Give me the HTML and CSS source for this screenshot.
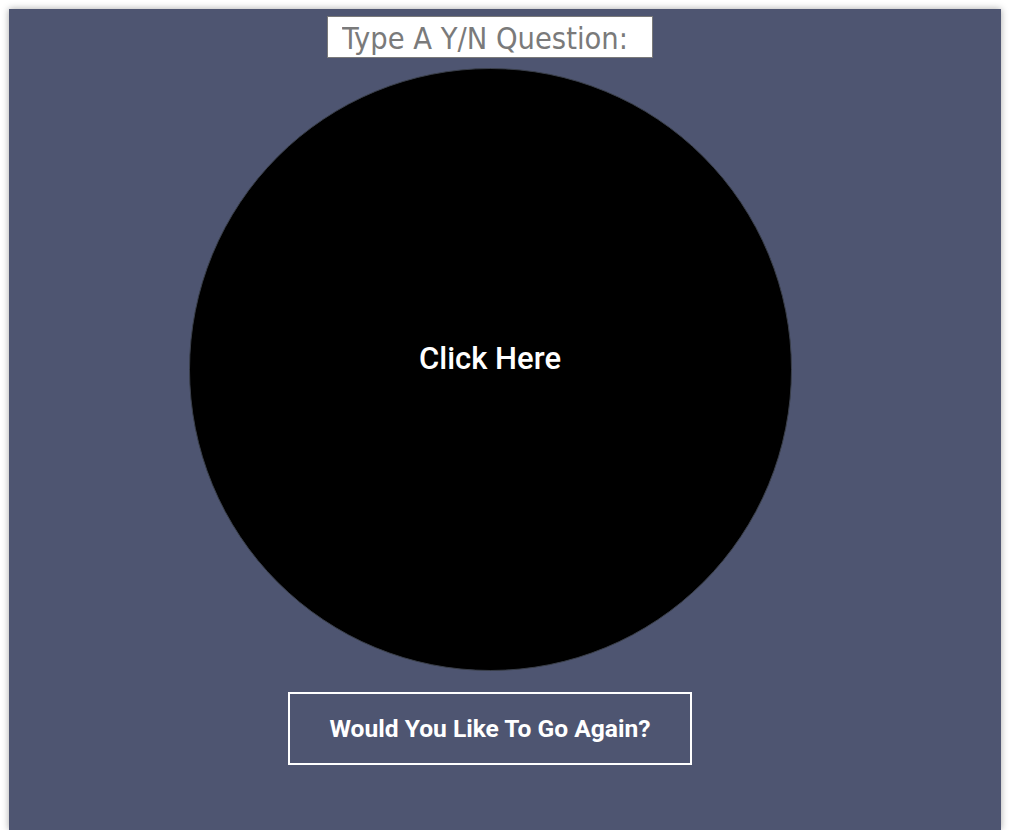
FILE: index.html
```html
<!DOCTYPE html>
<html>
<head>
<meta charset="utf-8">
<link rel="stylesheet" href="styles.css">
</head>
<body>
<div class="panel">
  <input class="question" type="text" placeholder="Type A Y/N Question:">
  <div class="ball"><span class="ball-text">Click Here</span></div>
  <button class="again">Would You Like To Go Again?</button>
</div>
</body>
</html>
```
FILE: styles.css
```css
html, body {
  margin: 0;
  padding: 0;
  background: #ffffff;
}
.panel {
  box-sizing: border-box;
  margin: 9px 0 0 9px;
  width: 992px;
  height: 821px;
  background: #4e5571;
  box-shadow: 0 0 7px rgba(0, 0, 0, 0.35);
  display: flex;
  flex-direction: column;
  align-items: center;
  padding: 7px 30px 0 0;
}
.question {
  box-sizing: border-box;
  width: 326px;
  height: 42px;
  border: 1px solid #7a7a7a;
  background: #ffffff;
  font-family: "DejaVu Sans Condensed", "DejaVu Sans", sans-serif;
  font-stretch: condensed;
  font-size: 30.5px;
  color: #777;
  padding: 2px 0 0 14px;
  margin: 0;
  outline: none;
}
.question::placeholder {
  color: #7a7a7a;
  opacity: 1;
}
.ball {
  box-sizing: border-box;
  margin-top: 10px;
  width: 603px;
  height: 603px;
  border-radius: 50%;
  background: #000;
  border: 1px solid #3a3f4a;
  display: flex;
  align-items: center;
  justify-content: center;
}
.ball-text {
  font-family: Roboto, "Liberation Sans", sans-serif;
  font-weight: 500;
  font-size: 31px;
  color: #fff;
  margin-bottom: 22px;
}
.again {
  box-sizing: border-box;
  margin-top: 21px;
  width: 404px;
  height: 73px;
  background: transparent;
  border: 2px solid #ffffff;
  color: #fff;
  font-family: Roboto, "Liberation Sans", sans-serif;
  font-weight: 700;
  font-size: 24.6px;
  cursor: pointer;
}
```
